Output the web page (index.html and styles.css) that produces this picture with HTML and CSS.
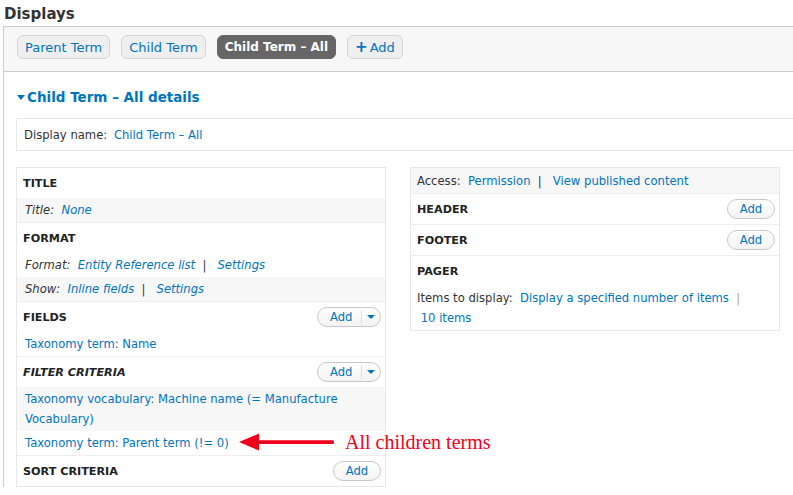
FILE: index.html
```html
<!DOCTYPE html>
<html>
<head>
<meta charset="utf-8">
<link rel="stylesheet" href="styles.css">
</head>
<body>
<h2 class="page-title">Displays</h2>
<div class="displays">
  <div class="tabbar">
    <a class="tab">Parent Term</a>
    <a class="tab">Child Term</a>
    <a class="tab active">Child Term – All</a>
    <a class="tab add"><span class="plus">+</span>Add</a>
  </div>
  <div class="details">
    <div class="details-title"><span class="tri"></span>Child Term – All details</div>
    <div class="display-name">Display name:&nbsp; <a class="link">Child Term – All</a></div>
    <div class="columns">
      <div class="col">
        <div class="bucket">
          <div class="bucket-title">Title</div>
          <div class="row zebra"><em>Title:&nbsp; <a class="link">None</a></em></div>
        </div>
        <div class="bucket">
          <div class="bucket-title">Format</div>
          <div class="row"><em>Format:&nbsp; <a class="link">Entity Reference list</a> &nbsp;|&nbsp;&nbsp; <a class="link">Settings</a></em></div>
          <div class="row zebra"><em>Show:&nbsp; <a class="link">Inline fields</a> &nbsp;|&nbsp;&nbsp; <a class="link">Settings</a></em></div>
        </div>
        <div class="bucket">
          <div class="bucket-title">Fields <span class="btn drop"><span class="btn-label">Add</span><span class="btn-arrow"></span></span></div>
          <div class="row"><a class="link">Taxonomy term: Name</a></div>
        </div>
        <div class="bucket">
          <div class="bucket-title italic">Filter criteria <span class="btn drop"><span class="btn-label">Add</span><span class="btn-arrow"></span></span></div>
          <div class="row zebra"><a class="link">Taxonomy vocabulary: Machine name (= Manufacture Vocabulary)</a></div>
          <div class="row annotated"><a class="link">Taxonomy term: Parent term (!= 0)</a>
            <div class="note">
              <svg class="arrow" width="96" height="20" viewBox="0 0 96 20"><polygon points="0,10 20,1.5 20,18.5" fill="#f0001c"/><rect x="18" y="8.3" width="77" height="3.6" rx="1.5" fill="#f0001c"/></svg>
              <span class="note-text">All children terms</span>
            </div>
          </div>
        </div>
        <div class="bucket">
          <div class="bucket-title">Sort criteria <span class="btn">Add</span></div>
        </div>
      </div>
      <div class="col right">
        <div class="bucket">
          <div class="row zebra access">Access:&nbsp; <a class="link">Permission</a> &nbsp;|&nbsp;&nbsp; <a class="link">View published content</a></div>
        </div>
        <div class="bucket">
          <div class="bucket-title">Header <span class="btn">Add</span></div>
        </div>
        <div class="bucket">
          <div class="bucket-title">Footer <span class="btn">Add</span></div>
        </div>
        <div class="bucket">
          <div class="bucket-title">Pager</div>
          <div class="row">Items to display:&nbsp; <a class="link">Display a specified number of items</a> &nbsp;<span class="pipe">|</span><br>&nbsp;<a class="link">10 items</a></div>
        </div>
      </div>
    </div>
  </div>
</div>
</body>
</html>
```
FILE: styles.css
```css
html, body {
  margin: 0;
  padding: 0;
  background: #fff;
  overflow: hidden;
}
body {
  font-family: "DejaVu Sans", Verdana, sans-serif;
  font-size: 11.6px;
  color: #333;
  width: 793px;
  height: 495px;
}
.page-title {
  margin: 0;
  padding: 5px 0 0 4px;
  height: 21px;
  font-size: 15px;
  line-height: 18px;
  font-weight: bold;
  color: #333;
}
.displays {
  margin-left: 3px;
  border-left: 1px solid #ccc;
  border-top: 1px solid #ccc;
  width: 820px;
}
.tabbar {
  background: #f7f7f7;
  border-bottom: 1px solid #ccc;
  height: 45px;
  box-sizing: border-box;
  padding: 8px 0 0 13px;
  display: flex;
  gap: 11px;
  align-items: flex-start;
}
.tab {
  display: inline-flex;
  align-items: center;
  height: 24px;
  box-sizing: border-box;
  padding: 0 7px;
  border: 1px solid #d4d4d4;
  border-radius: 6px;
  background: #efefef;
  color: #0074bd;
  font-size: 13px;
}
.tab.active {
  background: #666;
  border-color: #666;
  color: #fff;
  font-weight: bold;
  font-size: 12px;
}
.tab.add .plus {
  font-weight: bold;
  font-size: 15px;
  margin-right: 2px;
}
.details {
  padding: 16px 0 0 12px;
}
.details-title {
  display: flex;
  align-items: center;
  font-size: 13.5px;
  font-weight: bold;
  color: #0074bd;
  height: 18px;
}
.tri {
  width: 0;
  height: 0;
  border-left: 4.5px solid transparent;
  border-right: 4.5px solid transparent;
  border-top: 5px solid #0074bd;
  margin: 1px 2px 0 1px;
}
.display-name {
  margin-top: 12px;
  border: 1px solid #e8e8e8;
  height: 33px;
  box-sizing: border-box;
  padding: 0 7px;
  display: flex;
  align-items: center;
  width: 800px;
}
.display-name .link { margin-left: 3px; }
.link {
  color: #0074bd;
  text-decoration: none;
}
.columns {
  display: flex;
  gap: 24px;
  margin-top: 16px;
  align-items: flex-start;
}
.col {
  width: 370px;
  box-sizing: border-box;
  border: 1px solid #e8e8e8;
}
.bucket + .bucket {
  border-top: 1px solid #eee;
}
.bucket-title {
  height: 30px;
  display: flex;
  align-items: center;
  justify-content: space-between;
  padding: 0 4px 0 6px;
  font-weight: bold;
  text-transform: uppercase;
  font-size: 11.2px;
  color: #222;
}
.bucket-title.italic { font-style: italic; }
.row {
  padding: 2px 8px;
  line-height: 20px;
}
.row em { font-style: italic; }
.zebra { background: #f7f7f7; }
.right .row { padding-left: 6px; }
.right .access { padding-top: 3px; padding-bottom: 2px; }
.pipe { color: #c7a25c; }
.btn {
  display: inline-flex;
  align-items: center;
  justify-content: center;
  box-sizing: border-box;
  height: 20px;
  width: 48px;
  border: 1px solid #c8c8c8;
  border-radius: 10px;
  background: linear-gradient(#fff, #f3f3f3);
  color: #0074bd;
  font-weight: normal;
  text-transform: none;
  font-style: normal;
  font-size: 11.6px;
}
.btn.drop {
  width: 64px;
  justify-content: flex-start;
  padding-left: 12px;
}
.btn-label {
  padding-right: 9px;
  border-right: 1px solid #ddd;
  line-height: 14px;
}
.btn-arrow {
  width: 0;
  height: 0;
  margin-left: 5px;
  border-left: 4px solid transparent;
  border-right: 4px solid transparent;
  border-top: 4px solid #0074bd;
}
.annotated {
  position: relative;
}
.note {
  position: absolute;
  left: 222px;
  top: 1px;
  display: flex;
  align-items: center;
  white-space: nowrap;
  pointer-events: none;
}
.arrow { display: block; }
.note-text {
  margin-left: 10px;
  font-family: "Liberation Serif", "Times New Roman", serif;
  font-size: 20px;
  color: #f0001c;
  line-height: 20px;
}
```
